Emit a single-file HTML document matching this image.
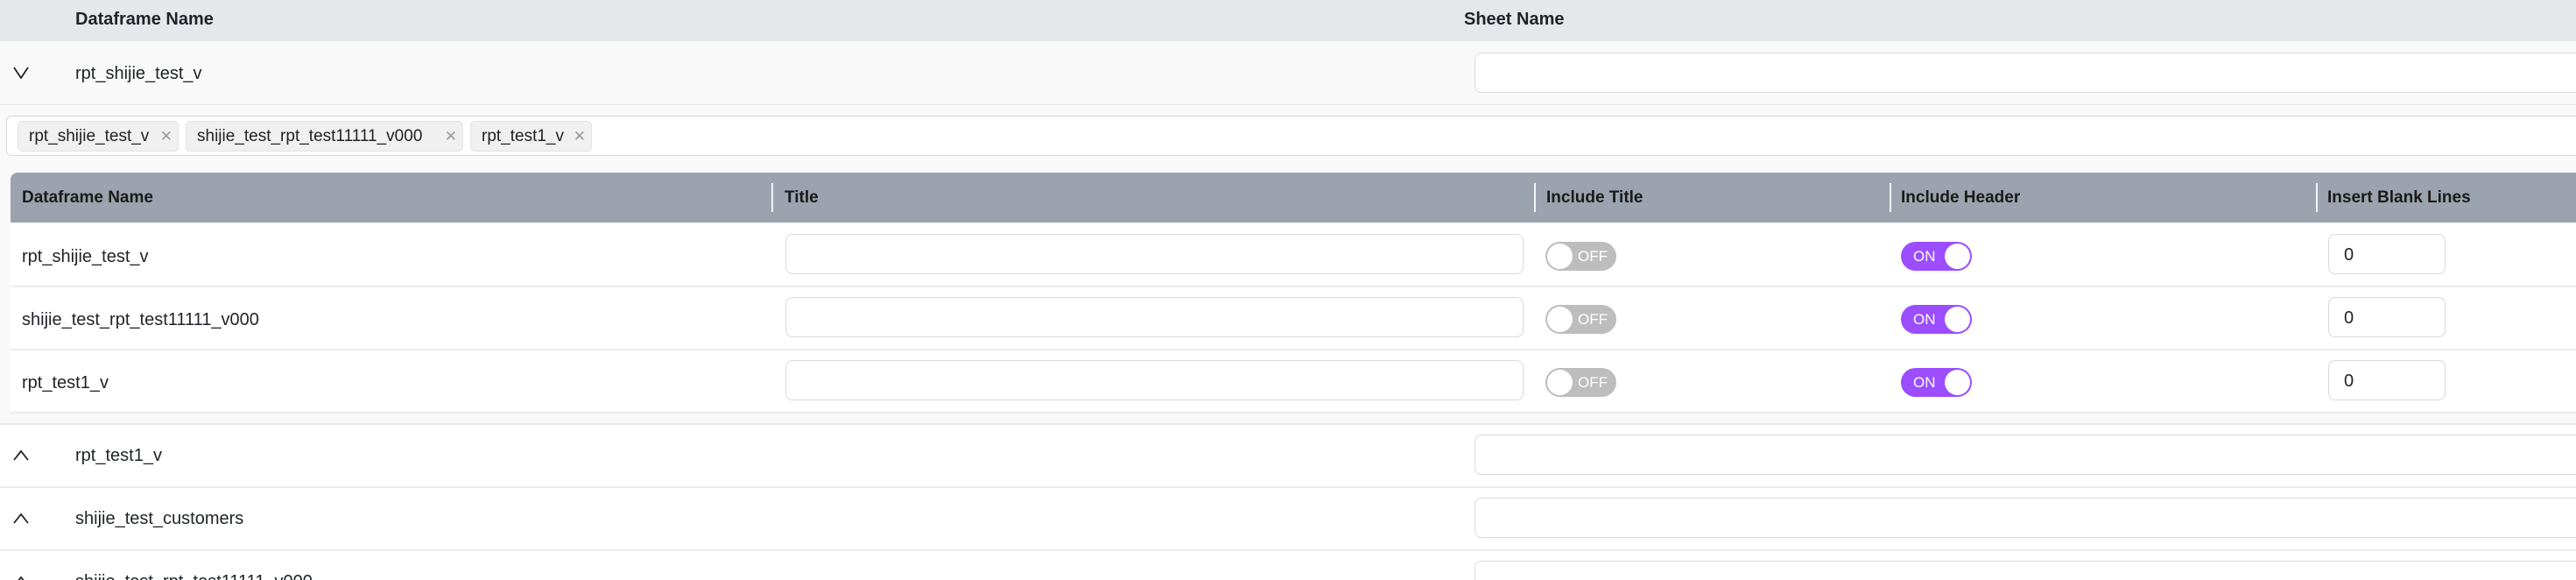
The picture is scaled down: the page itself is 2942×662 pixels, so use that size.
<!DOCTYPE html>
<html><head><meta charset="utf-8"><style>
*{box-sizing:border-box;margin:0;padding:0}
html,body{width:2942px;height:662px;overflow:hidden}
body{background:#fff;font-family:"Liberation Sans",sans-serif;color:#1f2328;font-size:20px}
#w{position:relative;width:2942px;height:662px;overflow:hidden}
.a{position:absolute}
.inp{position:absolute;border:1.5px solid #d9d9d9;border-radius:8px;background:#fff}
.t{position:absolute;white-space:nowrap}
.chev{position:absolute;left:15px;width:18px;height:14px}
.tag{position:absolute;top:138px;height:35px;background:#f0f0f0;border:1px solid #e3e3e3;border-radius:5px;font-size:19px;line-height:33px;padding-left:12px;color:#222}
.tag span{color:#999;font-size:17px;position:absolute;right:6px}
.hd{position:absolute;top:197px;height:57px;font-size:19px;font-weight:bold;line-height:57px;color:#1a1a1a}
.dv{position:absolute;top:209px;width:2px;height:33px;background:#f3f4f6}
.tog{position:absolute;width:81px;height:33px;border-radius:17px;font-size:17px;line-height:33px;color:#fff}
.off{left:1765px;background:#bdbdbd}
.off:before{content:"";position:absolute;left:2px;top:2px;width:29px;height:29px;border-radius:50%;background:#fff}
.off span{position:absolute;left:37px}
.on{left:2171px;background:#9b4dff}
.on:before{content:"";position:absolute;right:2px;top:2px;width:29px;height:29px;border-radius:50%;background:#fff}
.on span{position:absolute;left:14px}
</style></head><body><div id="w">
<div class="a" style="left:0;top:0;width:2942px;height:47px;background:#e5e7eb"></div>
<div class="t" style="left:86px;top:11px;font-weight:bold;font-size:20px">Dataframe Name</div>
<div class="t" style="left:1672px;top:11px;font-weight:bold;font-size:20px">Sheet Name</div>
<div class="a" style="left:0;top:47px;width:2942px;height:436px;background:#f9f9f9"></div>
<div class="a" style="left:0;top:119px;width:2942px;height:1px;background:#e8e8e8"></div>
<svg class="chev" style="top:76px" viewBox="0 0 18 14"><path d="M1 1 L9 13 L17 1" fill="none" stroke="#222" stroke-width="1.8"/></svg>
<div class="t" style="left:86px;top:73px">rpt_shijie_test_v</div>
<div class="inp" style="left:1684px;top:60px;width:1300px;height:46px"></div>
<div class="inp" style="left:7px;top:132px;width:2980px;height:46px;border-radius:6px"></div>
<div class="tag" style="left:20px;width:184px">rpt_shijie_test_v<span>✕</span></div>
<div class="tag" style="left:212px;width:317px">shijie_test_rpt_test11111_v000<span>✕</span></div>
<div class="tag" style="left:537px;width:139px">rpt_test1_v<span>✕</span></div>
<div class="a" style="left:12px;top:197px;width:2940px;height:57px;background:#9ca3af;border-radius:8px 0 0 0"></div>
<div class="hd" style="left:25px">Dataframe Name</div>
<div class="dv" style="left:881px"></div><div class="hd" style="left:896px">Title</div>
<div class="dv" style="left:1752px"></div><div class="hd" style="left:1766px">Include Title</div>
<div class="dv" style="left:2158px"></div><div class="hd" style="left:2171px">Include Header</div>
<div class="dv" style="left:2645px"></div><div class="hd" style="left:2658px">Insert Blank Lines</div>
<div class="a" style="left:12px;top:254px;width:2940px;height:216px;background:#fff"></div>
<div class="a" style="left:12px;top:326px;width:2940px;height:1.5px;background:#ececec"></div>
<div class="a" style="left:12px;top:398px;width:2940px;height:1.5px;background:#ececec"></div>
<div class="a" style="left:12px;top:470px;width:2940px;height:1.5px;background:#ececec"></div>
<div class="t" style="left:25px;top:282px">rpt_shijie_test_v</div>
<div class="t" style="left:25px;top:354px">shijie_test_rpt_test11111_v000</div>
<div class="t" style="left:25px;top:426px">rpt_test1_v</div>
<div class="inp" style="left:897px;top:267px;width:843px;height:46px"></div>
<div class="inp" style="left:897px;top:339px;width:843px;height:46px"></div>
<div class="inp" style="left:897px;top:411px;width:843px;height:46px"></div>
<div class="tog off" style="top:276px"><span>OFF</span></div>
<div class="tog off" style="top:348px"><span>OFF</span></div>
<div class="tog off" style="top:420px"><span>OFF</span></div>
<div class="tog on" style="top:276px"><span>ON</span></div>
<div class="tog on" style="top:348px"><span>ON</span></div>
<div class="tog on" style="top:420px"><span>ON</span></div>
<div class="inp" style="left:2659px;top:267px;width:134px;height:46px"><div class="t" style="left:17px;top:12px">0</div></div>
<div class="inp" style="left:2659px;top:339px;width:134px;height:46px"><div class="t" style="left:17px;top:12px">0</div></div>
<div class="inp" style="left:2659px;top:411px;width:134px;height:46px"><div class="t" style="left:17px;top:12px">0</div></div>
<div class="a" style="left:0;top:483px;width:2942px;height:1.5px;background:#e8e8e8"></div>
<div class="a" style="left:0;top:555px;width:2942px;height:1.5px;background:#ececec"></div>
<div class="a" style="left:0;top:627px;width:2942px;height:1.5px;background:#ececec"></div>
<svg class="chev" style="top:513px" viewBox="0 0 18 14"><path d="M1 12 L9 2 L17 12" fill="none" stroke="#222" stroke-width="1.8"/></svg>
<div class="t" style="left:86px;top:509px">rpt_test1_v</div>
<svg class="chev" style="top:585px" viewBox="0 0 18 14"><path d="M1 12 L9 2 L17 12" fill="none" stroke="#222" stroke-width="1.8"/></svg>
<div class="t" style="left:86px;top:581px">shijie_test_customers</div>
<svg class="chev" style="top:657px" viewBox="0 0 18 14"><path d="M1 12 L9 2 L17 12" fill="none" stroke="#222" stroke-width="1.8"/></svg>
<div class="t" style="left:86px;top:653px">shijie_test_rpt_test11111_v000</div>
<div class="inp" style="left:1684px;top:496px;width:1300px;height:46px"></div>
<div class="inp" style="left:1684px;top:568px;width:1300px;height:46px"></div>
<div class="inp" style="left:1684px;top:640px;width:1300px;height:46px"></div>
</div></body></html>
